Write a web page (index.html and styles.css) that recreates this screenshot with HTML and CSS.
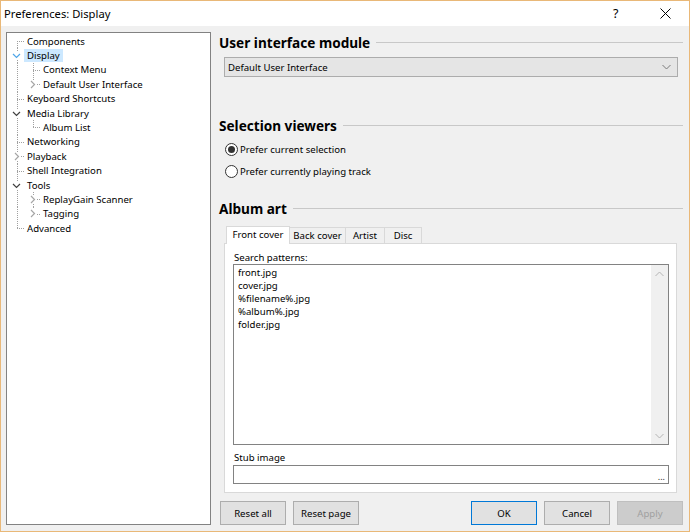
FILE: index.html
```html
<!DOCTYPE html>
<html>
<head>
<meta charset="utf-8">
<link rel="stylesheet" href="styles.css">
</head>
<body>
<div class="window">
  <div class="titlebar">
    <span class="title">Preferences: Display</span>
    <span class="help">?</span>
    <span class="close"><svg width="11" height="11" viewBox="0 0 11 11"><path d="M0.5 0.5L10.5 10.5M10.5 0.5L0.5 10.5" stroke="#000" stroke-width="1" fill="none"/></svg></span>
  </div>
  <div class="body">
    <div class="tree">
      <div class="row"><span class="g0 vb-h"></span><span class="lbl">Components</span></div>
      <div class="row"><span class="g0 v"><svg class="chev" width="9" height="9" viewBox="0 0 9 9"><path d="M1 3L4.5 6.5L8 3" stroke="#4ea5e8" stroke-width="1.2" fill="none"/></svg></span><span class="lbl sel">Display</span></div>
      <div class="row"><span class="g0 v"></span><span class="g1 v-h"></span><span class="lbl">Context Menu</span></div>
      <div class="row"><span class="g0 v"></span><span class="g1 vt-h"><svg class="chev1" width="9" height="9" viewBox="0 0 9 9"><path d="M3 1L6.5 4.5L3 8" stroke="#a6a6a6" stroke-width="1.2" fill="none"/></svg></span><span class="lbl">Default User Interface</span></div>
      <div class="row"><span class="g0 v-h"></span><span class="lbl">Keyboard Shortcuts</span></div>
      <div class="row"><span class="g0 v"><svg class="chev" width="9" height="9" viewBox="0 0 9 9"><path d="M1 3L4.5 6.5L8 3" stroke="#404040" stroke-width="1.2" fill="none"/></svg></span><span class="lbl">Media Library</span></div>
      <div class="row"><span class="g0 v"></span><span class="g1 vt-h"></span><span class="lbl">Album List</span></div>
      <div class="row"><span class="g0 v-h"></span><span class="lbl">Networking</span></div>
      <div class="row"><span class="g0 v-h"><svg class="chev" width="9" height="9" viewBox="0 0 9 9"><path d="M3 1L6.5 4.5L3 8" stroke="#a6a6a6" stroke-width="1.2" fill="none"/></svg></span><span class="lbl">Playback</span></div>
      <div class="row"><span class="g0 v-h"></span><span class="lbl">Shell Integration</span></div>
      <div class="row"><span class="g0 v"><svg class="chev" width="9" height="9" viewBox="0 0 9 9"><path d="M1 3L4.5 6.5L8 3" stroke="#404040" stroke-width="1.2" fill="none"/></svg></span><span class="lbl">Tools</span></div>
      <div class="row"><span class="g0 v"></span><span class="g1 v-h"><svg class="chev1" width="9" height="9" viewBox="0 0 9 9"><path d="M3 1L6.5 4.5L3 8" stroke="#a6a6a6" stroke-width="1.2" fill="none"/></svg></span><span class="lbl">ReplayGain Scanner</span></div>
      <div class="row"><span class="g0 v"></span><span class="g1 vt-h"><svg class="chev1" width="9" height="9" viewBox="0 0 9 9"><path d="M3 1L6.5 4.5L3 8" stroke="#a6a6a6" stroke-width="1.2" fill="none"/></svg></span><span class="lbl">Tagging</span></div>
      <div class="row"><span class="g0 vt-h"></span><span class="lbl">Advanced</span></div>
    </div>

    <div class="main">
      <div class="heading h1"><span>User interface module</span><i class="rule"></i></div>
      <div class="combo"><span>Default User Interface</span><svg width="9" height="6" viewBox="0 0 9 6"><path d="M0.5 1L4.5 5L8.5 1" stroke="#7a7a7a" stroke-width="1" fill="none"/></svg></div>

      <div class="heading h2"><span>Selection viewers</span><i class="rule"></i></div>
      <div class="radio r1"><span class="circle on"><span class="dot"></span></span><span>Prefer current selection</span></div>
      <div class="radio r2"><span class="circle"></span><span>Prefer currently playing track</span></div>

      <div class="heading h3"><span>Album art</span><i class="rule"></i></div>
      <div class="tabs">
        <span class="tab active">Front cover</span><span class="tab t2">Back cover</span><span class="tab t3">Artist</span><span class="tab t4">Disc</span>
      </div>
      <div class="panel">
        <div class="flabel">Search patterns:</div>
        <div class="listbox">
          <div class="lines">
            <div>front.jpg</div>
            <div>cover.jpg</div>
            <div>%filename%.jpg</div>
            <div>%album%.jpg</div>
            <div>folder.jpg</div>
          </div>
          <div class="scroll">
            <svg width="9" height="6" viewBox="0 0 9 6"><path d="M0.5 5L4.5 1L8.5 5" stroke="#b4b4b4" stroke-width="1" fill="none"/></svg>
            <svg width="9" height="6" viewBox="0 0 9 6"><path d="M0.5 1L4.5 5L8.5 1" stroke="#b4b4b4" stroke-width="1" fill="none"/></svg>
          </div>
        </div>
        <div class="flabel stub">Stub image</div>
        <div class="input"><span class="dots">...</span></div>
      </div>
      <div class="buttons">
        <span class="btn">Reset all</span>
        <span class="btn">Reset page</span>
        <span class="spacer"></span>
        <span class="btn ok">OK</span>
        <span class="btn">Cancel</span>
        <span class="btn disabled">Apply</span>
      </div>
    </div>
  </div>
</div>
</body>
</html>
```
FILE: styles.css
```css
* { box-sizing: border-box; }
html, body { margin: 0; padding: 0; }
body {
  width: 690px; height: 532px; overflow: hidden;
  font-family: "Noto Sans", "Open Sans", sans-serif;
  font-size: 9.6px; color: #000;
}
.window {
  width: 690px; height: 532px;
  border: 1px solid #e9b878;
  background: #f0f0f0;
  display: flex; flex-direction: column;
}
.titlebar {
  height: 25px; background: #fff;
  display: flex; align-items: center;
  padding-left: 3px;
  font-size: 11.2px;
}
.title { flex: 1; }
.help { width: 14px; margin-right: 33px; font-size: 12.5px; color: #000; }
.close { width: 11px; height: 11px; margin-right: 18px; display: flex; }
.body {
  height: 505px;
  display: flex;
  padding: 6px 0 6px 5px;
}
.tree {
  width: 205px; height: 493px;
  background: #fff;
  border: 1px solid #828282;
  padding-top: 1px;
}
.row { height: 14.4px; display: flex; }
.g0, .g1 { display: flex; align-items: center; background-repeat: no-repeat; }
.g0 { width: 17px; }
.g1 { width: 16px; }
.lbl { align-self: center; line-height: 13px; padding: 0 3px; white-space: nowrap; }
.lbl.sel { background: #cce8ff; }

.g0.v, .g0.v-h, .g0.vb-h, .g0.vt-h { --x: 10px; }
.g1.v, .g1.v-h, .g1.vb-h, .g1.vt-h { --x: 9px; }
.v {
  background-image: repeating-linear-gradient(to bottom, #a0a0a0 0 1px, transparent 1px 2px);
  background-size: 1px 100%;
  background-position: var(--x) 0;
}
.v-h {
  background-image: repeating-linear-gradient(to bottom, #a0a0a0 0 1px, transparent 1px 2px), repeating-linear-gradient(to right, #a0a0a0 0 1px, transparent 1px 2px);
  background-size: 1px 100%, 8px 1px;
  background-position: var(--x) 0, var(--x) 7px;
}
.vt-h {
  background-image: repeating-linear-gradient(to bottom, #a0a0a0 0 1px, transparent 1px 2px), repeating-linear-gradient(to right, #a0a0a0 0 1px, transparent 1px 2px);
  background-size: 1px 7px, 8px 1px;
  background-position: var(--x) 0, var(--x) 7px;
}
.vb-h {
  background-image: repeating-linear-gradient(to bottom, #a0a0a0 0 1px, transparent 1px 2px), repeating-linear-gradient(to right, #a0a0a0 0 1px, transparent 1px 2px);
  background-size: 1px 8px, 8px 1px;
  background-position: var(--x) 7px, var(--x) 7px;
}
.chev { margin-left: 5px; background: #fff; }
.chev1 { margin-left: 4px; background: #fff; }

.main {
  width: 478px;
  padding: 2px 6px 0 8px;
  display: flex; flex-direction: column;
}
.heading {
  height: 16px; display: flex; align-items: center;
  font-size: 13.6px; font-weight: bold; white-space: nowrap;
}
.heading .rule { flex: 1; height: 1px; background: #c8c8c8; margin-left: 6px; }
.h2 { margin-top: 40px; }
.h3 { margin-top: 21px; }
.combo {
  margin: 7px 5px 0 5px; height: 20px;
  background: #e5e5e5; border: 1px solid #acacac;
  display: flex; align-items: center; justify-content: space-between;
  padding: 0 6px 0 3px;
}
.radio { height: 16px; display: flex; align-items: center; margin-left: 6px; }
.r1 { margin-top: 8px; }
.r2 { margin-top: 6px; }
.circle {
  width: 13px; height: 13px; border-radius: 50%;
  border: 1px solid #333; background: #fff;
  margin-right: 2px;
  display: flex; align-items: center; justify-content: center;
}
.circle .dot { width: 7px; height: 7px; border-radius: 50%; background: #333; }

.tabs { margin: 9px 0 0 7px; height: 18px; display: flex; align-items: flex-end; }
.tab {
  height: 16px;
  border: 1px solid #d9d9d9; border-bottom: none; border-left: none;
  background: #f0f0f0;
  display: flex; align-items: center; justify-content: center;
  line-height: 14px; white-space: nowrap;
}
.tab.active {
  width: 64px; height: 18px; background: #fff;
  border-left: 1px solid #d9d9d9;
  padding-bottom: 2px;
  margin-bottom: -1px;
  position: relative; z-index: 1;
}
.t2 { width: 56px; }
.t3 { width: 39px; }
.t4 { width: 37px; }
.panel {
  margin: 0 6px 0 5px;
  height: 250px;
  background: #fff;
  border: 1px solid #d9d9d9;
  padding: 7px 7px 8px 8px;
  display: flex; flex-direction: column;
}
.flabel { height: 13px; line-height: 13px; margin-left: 1px; }
.flabel.stub { margin-top: 6px; height: 14px; }
.listbox {
  height: 181px; border: 1px solid #828282; background: #fff;
  display: flex;
}
.lines { flex: 1; padding: 1px 0 0 4px; line-height: 13px; }
.scroll {
  width: 17px; background: #f0f0f0;
  display: flex; flex-direction: column; justify-content: space-between; align-items: center;
  padding: 6px 0 5px 0;
}
.input {
  height: 19px; border: 1px solid #828282; background: #fff;
  display: flex; justify-content: flex-end; align-items: flex-end;
  padding: 0 3px 1px 0;
}
.dots { font-size: 9px; line-height: 10px; color: #333; }

.buttons { margin-top: 8px; display: flex; margin-left: 1px; }
.btn {
  width: 66px; height: 24px;
  background: #e1e1e1; border: 1px solid #adadad;
  display: flex; align-items: center; justify-content: center;
  margin-right: 7px;
}
.spacer { flex: 1; }
.btn.ok { border-color: #0078d7; }
.btn.disabled { background: #cccccc; border-color: #bfbfbf; color: #a0a0a0; margin-right: 0; }
```
